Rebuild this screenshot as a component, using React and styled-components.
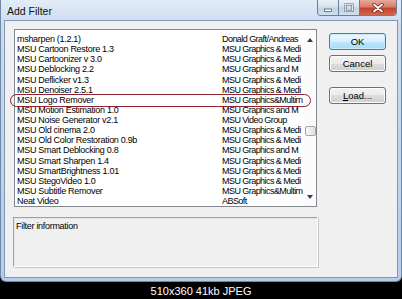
import styled, { createGlobalStyle } from "styled-components";

const GlobalStyle = createGlobalStyle`
  html, body {
    margin: 0;
    padding: 0;
    background: #000;
  }
  body {
    font-family: "Liberation Sans", Arial, sans-serif;
  }
`;

// the list is narrow, so the author column shows only what fits
const filters = [
  ["msharpen (1.2.1)", "Donald Graft/Andreas"],
  ["MSU Cartoon Restore 1.3", "MSU Graphics & Medi"],
  ["MSU Cartoonizer v 3.0", "MSU Graphics & Medi"],
  ["MSU Deblocking 2.2", "MSU Graphics and M"],
  ["MSU Deflicker v1.3", "MSU Graphics & Medi"],
  ["MSU Denoiser 2.5.1", "MSU Graphics & Medi"],
  ["MSU Logo Remover", "MSU Graphics&Multim", true],
  ["MSU Motion Estimation 1.0", "MSU Graphics and M"],
  ["MSU Noise Generator v2.1", "MSU Video Group"],
  ["MSU Old cinema 2.0", "MSU Graphics & Medi"],
  ["MSU Old Color Restoration 0.9b", "MSU Graphics & Medi"],
  ["MSU Smart Deblocking 0.8", "MSU Graphics and M"],
  ["MSU Smart Sharpen 1.4", "MSU Graphics & Medi"],
  ["MSU SmartBrightness 1.01", "MSU Graphics & Medi"],
  ["MSU StegoVideo 1.0", "MSU Graphics & Medi"],
  ["MSU Subtitle Remover", "MSU Graphics&Multim"],
  ["Neat Video", "ABSoft"],
];

const Page = styled.div`
  width: 402px;
  height: 299px;
  display: flex;
  flex-direction: column;
  background: #000;
  overflow: hidden;
`;

const Window = styled.div`
  height: 282px;
  box-sizing: border-box;
  display: flex;
  flex-direction: column;
  padding: 0 3px 3px;
  border: 1px solid #6f88a8;
  border-top: none;
  border-radius: 0 0 6px 6px;
  background: linear-gradient(180deg, #e3edf9 0%, #cddcef 8%, #bfd3ec 60%, #b6cce8 100%);
`;

const TitleBar = styled.div`
  height: 20px;
  display: flex;
  align-items: flex-start;
`;

const Title = styled.div`
  padding: 5px 0 0 3px;
  font-size: 10.5px;
  color: #111;
`;

const CaptionButtons = styled.div`
  margin-left: auto;
  margin-right: 1px;
  display: flex;
  height: 15px;
  border: 1px solid #6a7e99;
  border-top: none;
  border-radius: 0 0 4px 4px;
  overflow: hidden;
`;

const CaptionButton = styled.div`
  width: ${(p) => p.$w}px;
  display: flex;
  align-items: center;
  justify-content: center;
  background: ${(p) =>
    p.$close
      ? "linear-gradient(180deg, #e9a99b 0%, #d9806c 45%, #c2442b 55%, #d3684c 100%)"
      : "linear-gradient(180deg, #e9f0f8 0%, #d6e1ee 45%, #c3d2e4 55%, #d2deec 100%)"};
  & + & {
    border-left: 1px solid #6a7e99;
  }
`;

const Client = styled.div`
  flex: 1;
  display: flex;
  flex-direction: column;
  box-sizing: border-box;
  padding: 8px 10px 0 8px;
  border: 1px solid #8396b0;
  background: #f0f0f0;
`;

const TopRow = styled.div`
  display: flex;
  align-items: flex-start;
  gap: 12px;
`;

const ListBox = styled.div`
  margin-left: 1px;
  width: 303px;
  height: 178px;
  box-sizing: border-box;
  display: flex;
  border: 1px solid #828790;
  background: #fff;
`;

const ListBody = styled.div`
  flex: 1;
  padding: 4px 0 0 2px;
`;

const Row = styled.div`
  position: relative;
  height: 10.125px;
  display: grid;
  grid-template-columns: 205px 1fr;
  font-size: 9px;
  line-height: 10.125px;
  letter-spacing: -0.3px;
  color: #000;
  white-space: nowrap;
  &::after {
    content: "";
    display: ${(p) => (p.$circled ? "block" : "none")};
    position: absolute;
    left: -7px;
    right: -7px;
    top: -1px;
    bottom: -2px;
    border: 1.5px solid #8e2232;
    border-radius: 8px;
    z-index: 2;
  }
`;

const Cell = styled.div`
  overflow: hidden;
  letter-spacing: ${(p) => (p.$tight ? "-0.55px" : "inherit")};
`;

const ScrollBar = styled.div`
  width: 12px;
  display: flex;
  flex-direction: column;
  align-items: center;
  background: #fbfbfb;
`;

const Arrow = styled.div`
  height: ${(p) => p.$h}px;
  display: flex;
  align-items: center;
  justify-content: center;
`;

const Thumb = styled.div`
  margin-top: ${(p) => p.$offset}px;
  width: 11px;
  height: 10px;
  box-sizing: border-box;
  border: 1px solid #a6a6a6;
  border-radius: 2px;
  background: linear-gradient(90deg, #f7f7f7, #e2e2e2);
`;

const Spacer = styled.div`
  flex: 1;
`;

const ButtonColumn = styled.div`
  width: 57px;
  padding-top: 4px;
  display: flex;
  flex-direction: column;
`;

const Button = styled.button`
  height: 17px;
  box-sizing: border-box;
  margin: 0 0 ${(p) => p.$gap || 0}px;
  padding: 0;
  font-family: "Liberation Sans", Arial, sans-serif;
  font-size: 9.5px;
  color: #000;
  border: 1px solid ${(p) => (p.$default ? "#3c7fb1" : "#707070")};
  border-radius: 3px;
  background: ${(p) =>
    p.$default
      ? "linear-gradient(180deg, #eaf6fd 0%, #d9f0fc 50%, #bee6fd 50%, #a7d9f5 100%)"
      : "linear-gradient(180deg, #f2f2f2 0%, #ebebeb 50%, #dddddd 50%, #cfcfcf 100%)"};
  box-shadow: inset 0 0 0 1px ${(p) => (p.$default ? "#c8ecfc" : "#fcfcfc")};
  u {
    text-decoration: underline;
  }
`;

const InfoBox = styled.div`
  margin-top: 10px;
  width: 305px;
  height: 50px;
  box-sizing: border-box;
  padding: 3px 2px;
  border: 1px solid;
  border-color: #a0a0a0 #ffffff #ffffff #a0a0a0;
  box-shadow: inset 1px 1px 0 #e6e6e6, 1px 1px 0 #c9c9c9;
  font-size: 9px;
  letter-spacing: -0.3px;
  color: #000;
`;

const Caption = styled.div`
  flex: 1;
  display: flex;
  align-items: center;
  justify-content: center;
  color: #fff;
  font-size: 11px;
`;

function CloseGlyph() {
  return (
    <svg width="12" height="10" viewBox="0 0 12 10">
      <path d="M2 1.5 L10 8.5 M10 1.5 L2 8.5" stroke="#6b2418" strokeWidth="3.4" strokeLinecap="round" />
      <path d="M2 1.5 L10 8.5 M10 1.5 L2 8.5" stroke="#fff" strokeWidth="1.8" strokeLinecap="round" />
    </svg>
  );
}

function MinGlyph() {
  return (
    <svg width="10" height="10" viewBox="0 0 10 10">
      <rect x="1.5" y="6" width="7" height="2.5" fill="#fff" stroke="#52637a" strokeWidth="0.8" />
    </svg>
  );
}

function MaxGlyph() {
  return (
    <svg width="10" height="10" viewBox="0 0 10 10">
      <rect x="1.5" y="1.5" width="7" height="6.5" fill="none" stroke="#52637a" strokeWidth="2" />
      <rect x="1.5" y="1.5" width="7" height="6.5" fill="none" stroke="#fff" strokeWidth="0.8" />
    </svg>
  );
}

function Triangle({ down }) {
  return (
    <svg width="6" height="4" viewBox="0 0 6 4">
      <path d={down ? "M0 0 L6 0 L3 4 Z" : "M0 4 L6 4 L3 0 Z"} fill="#3b3b3b" />
    </svg>
  );
}

export default function App() {
  return (
    <Page>
      <GlobalStyle />
      <Window>
        <TitleBar>
          <Title>Add Filter</Title>
          <CaptionButtons>
            <CaptionButton $w={20}>
              <MinGlyph />
            </CaptionButton>
            <CaptionButton $w={20}>
              <MaxGlyph />
            </CaptionButton>
            <CaptionButton $w={36} $close>
              <CloseGlyph />
            </CaptionButton>
          </CaptionButtons>
        </TitleBar>
        <Client>
          <TopRow>
            <ListBox>
              <ListBody>
                {filters.map(([name, author, circled]) => (
                  <Row key={name} $circled={circled}>
                    <Cell>{name}</Cell>
                    <Cell $tight>{author}</Cell>
                  </Row>
                ))}
              </ListBody>
              <ScrollBar>
                <Arrow $h={20}>
                  <Triangle />
                </Arrow>
                <Thumb $offset={76} />
                <Spacer />
                <Arrow $h={18}>
                  <Triangle down />
                </Arrow>
              </ScrollBar>
            </ListBox>
            <ButtonColumn>
              <Button $default $gap={5}>OK</Button>
              <Button $gap={15}>Cancel</Button>
              <Button>
                <u>L</u>oad...
              </Button>
            </ButtonColumn>
          </TopRow>
          <InfoBox>Filter information</InfoBox>
        </Client>
      </Window>
      <Caption>510x360 41kb JPEG</Caption>
    </Page>
  );
}
